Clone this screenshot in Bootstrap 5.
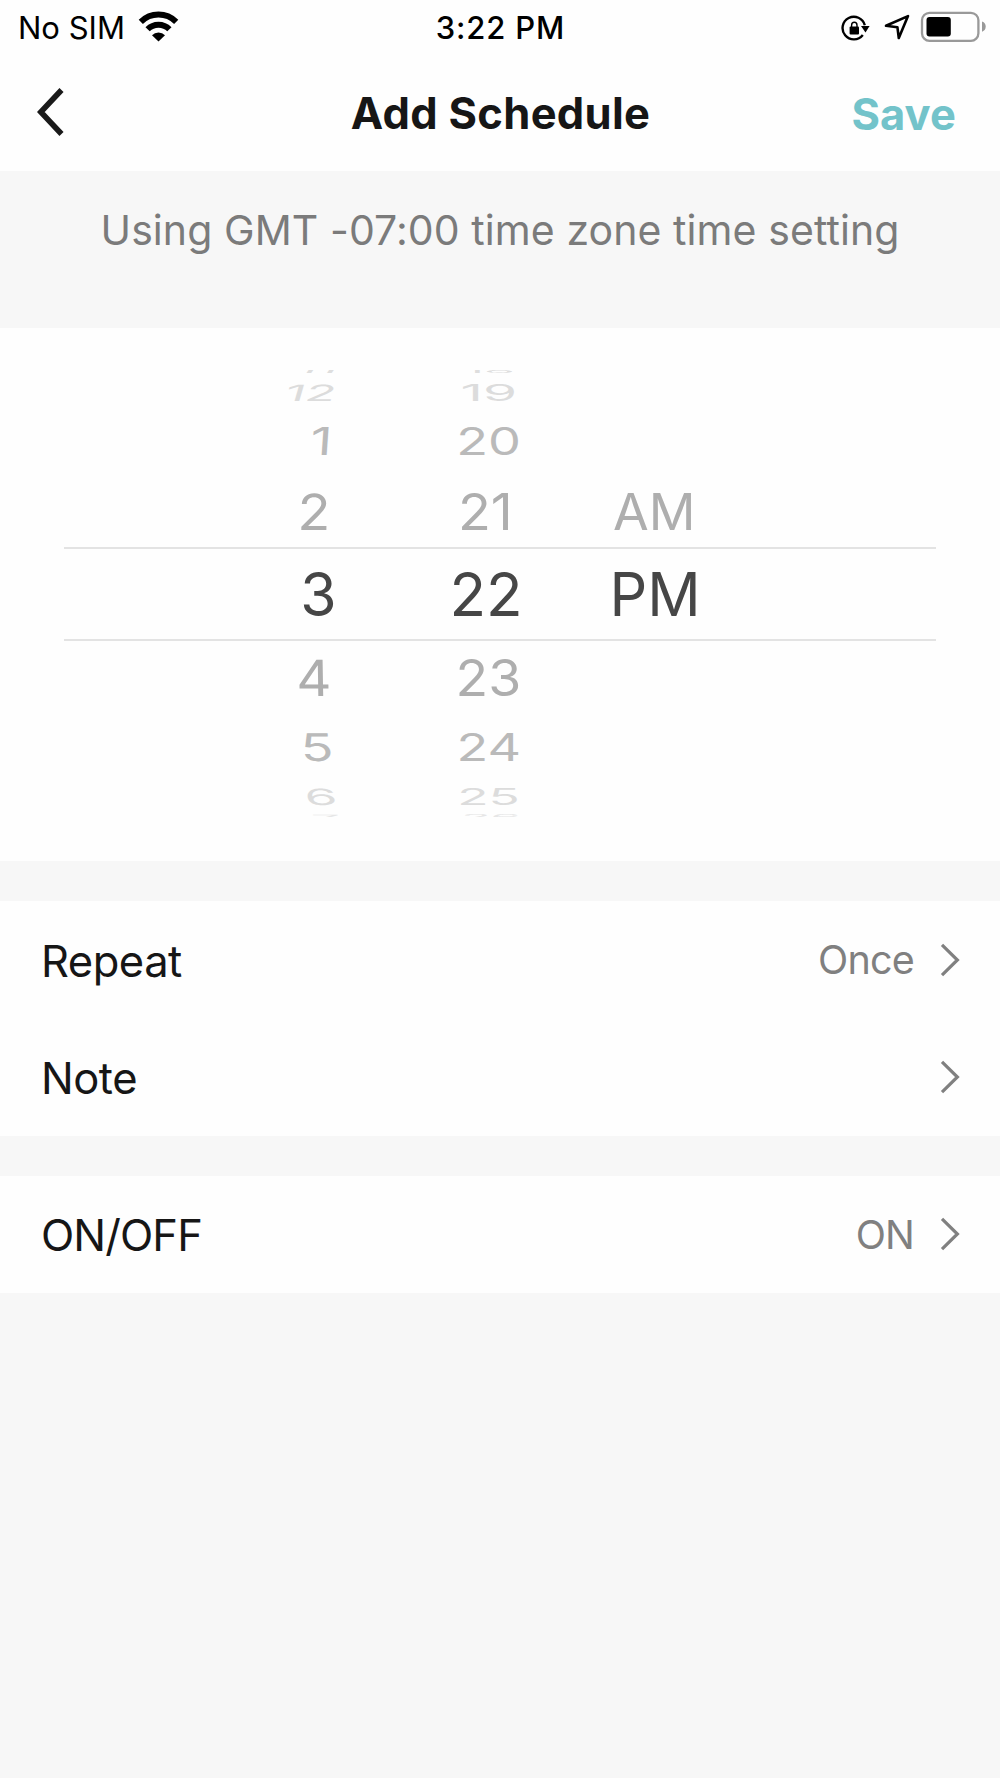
<!DOCTYPE html>
<html lang="en">
<head>
<meta charset="utf-8">
<meta name="viewport" content="width=device-width, initial-scale=1">
<title>Add Schedule</title>
<link href="https://cdn.jsdelivr.net/npm/bootstrap@5.3.0/dist/css/bootstrap.min.css" rel="stylesheet">
<style>
  body { font-family: Inter, "Liberation Sans", sans-serif; background: #f7f7f7; color: #161616; line-height: 1; min-height: 1778px; overflow-x: hidden; }
  svg { display: block; flex: none; }
  .surface { background: #fefefe; }

  .status-bar { height: 56px; color: #000; font-size: 31px; padding: 0 13px 1px 18px; }
  .status-side { flex: 1 1 0; }
  .wifi { margin: -2px 0 0 13px; }
  .clock { font-weight: 500; letter-spacing: .85px; margin: 0 4px 0 0; }
  .status-icons { margin-top: -1px; }

  .title-bar { height: 115px; padding: 0 45px 0 46px; }
  .title-side { flex: 1 1 0; }
  .back-icon { margin: -3px 0 0 -9px; }
  .page-title { font-size: 43.5px; font-weight: 700; letter-spacing: .3px; }
  .save-link { font-size: 43.5px; font-weight: 700; letter-spacing: .1px; color: #73c3ca; padding-top: 2px; margin-right: -1px; }

  .zone-hint { height: 157px; padding-top: 39px; font-size: 41px; line-height: 41px; letter-spacing: .08px; color: #7b7b7b; }

  /* Time wheel: each row is tilted a little further back than its neighbour */
  .picker { height: 533px; padding: 41px 64px 0; font-size: 50px; color: #aeaeae; }
  .wheel-row { display: grid; grid-template: 100% / 270px 186px 1fr; align-items: center; white-space: nowrap; --sy: 1; --dy: .7px; --lean: 0deg; }
  .wheel-row > span { justify-self: end; transform-origin: 100% 50%; transform: translate(var(--dx, 0), var(--dy)) skewX(var(--lean)) scale(var(--sx, 1), var(--sy)); }
  .wheel-row > span + span { --lean: 0deg; }
  .wheel-row > .meridiem { justify-self: start; margin-left: 93px; transform-origin: 0 50%; }
  .h-edge { height: 9px; --sy: .13; --dy: -3px; color: #dedede; clip-path: inset(1px 0 0 0); }
  .h-far { height: 28px; --sy: .45; color: #dcdcdc; }
  .h-mid { height: 69px; --sy: .77; --dy: 0px; color: #bababa; }
  .h-near { height: 72px; }
  .h-now { height: 94px; --dy: 0px; font-size: 60px; color: #464646; border: solid #e3e3e3; border-width: 2px 0; }
  .below.h-mid { height: 68px; --sy: .76; --dy: .7px; }
  .below.h-far { height: 30px; }
  .below.h-edge { --sy: .12; --dy: 1px; clip-path: inset(0 0 3px 0); color: #e6e6e6; }
  .v11 { --dx: 4px; --lean: -35deg; }
  .v18 { --dx: -5px; }
  .v12 { --dx: 2.5px; --lean: -16deg; }
  .v19 { --dx: -3.3px; --sx: 1.1; }
  .v1 { --dx: -2px; --sx: 1.07; --lean: -4deg; }
  .v20 { --dx: 1px; --sx: 1.045; }
  .v2 { --dx: -4px; --sx: 1.08; --lean: -1deg; }
  .v21 { --dx: -7px; --sx: 1.08; }
  .am { --sx: 1.035; }
  .v3 { --dx: 2.5px; --sx: .98; }
  .v22 { --dx: 2.6px; }
  .pm { --dx: -3.4px; --sx: .985; }
  .v4 { --dx: -3px; --sx: 1.09; --lean: 1deg; }
  .v23 { --dx: .8px; --sx: 1.07; }
  .v5 { --dx: -1px; --sx: 1.08; --lean: 3deg; }
  .v24 { --dx: 1px; --sx: 1.04; }
  .v6 { --dx: 3px; --sx: 1.05; --lean: 10deg; }
  .v25 { --sx: 1.03; }
  .v7 { --dx: 7px; --sx: 1.04; --lean: 30deg; }
  .v26 { --sx: .96; }

  .gap-band { height: 40px; }
  .setting { height: 117.3px; padding: 0 40px 0 41px; color: #161616; }
  .setting-name { font-size: 43.5px; letter-spacing: -.5px; padding-top: 4px; }
  .setting-name.caps { letter-spacing: -.9px; }
  .setting-value { font-size: 39.5px; letter-spacing: -.8px; color: #808080; padding-top: 3px; margin-right: 26px; }
</style>
</head>
<body>
<header class="surface">
  <div class="status-bar d-flex align-items-center">
    <div class="status-side d-flex align-items-center">
      <span>No SIM</span>
      <svg class="wifi" width="41" height="31" viewBox="0 0 41 31" fill="none" stroke="#000" stroke-width="5.9">
        <path d="M2.8 10.9A25 25 0 0 1 38.2 10.9"/>
        <path d="M9.6 18.3A15.2 15.2 0 0 1 31.4 18.3"/>
        <path d="M14 24.2A9 9 0 0 1 27 24.2L20.5 30.6Z" fill="#000" stroke="none"/>
      </svg>
    </div>
    <span class="clock">3:22 PM</span>
    <div class="status-side status-icons d-flex align-items-center justify-content-end">
      <svg width="146" height="32" viewBox="841 11 146 32" fill="none" stroke="#000">
        <path d="M864.8 25.2A11.3 11.3 0 1 0 862.8 35" stroke-width="2.4"/>
        <path d="M861 26H869.6L865.5 32.4Z" fill="#000" stroke="none"/>
        <rect x="849.6" y="26.6" width="9.4" height="7.8" rx="1" fill="#000" stroke="none"/>
        <path d="M851.6 27V25.2A2.7 2.9 0 0 1 857 25.2V27" stroke-width="1.4"/>
        <path d="M886 25.8L908 16.1L898.8 38L897.4 27.2Z" stroke-width="2.6" stroke-linejoin="round"/>
        <rect x="922" y="12.8" width="56.4" height="28" rx="7.5" stroke="#999" stroke-width="2.3"/>
        <rect x="926.5" y="17" width="24.3" height="19.4" rx="3" fill="#000" stroke="none"/>
        <path d="M982 21.5C984.6 22.3 985.7 24.2 985.7 26.6S984.6 30.9 982 31.8Z" fill="#999" stroke="none"/>
      </svg>
    </div>
  </div>
  <nav class="title-bar d-flex align-items-center">
    <div class="title-side">
      <svg class="back-icon" width="27" height="48" viewBox="0 0 27 48" fill="none" stroke="#1a1a1a" stroke-width="5.6"><path d="M24.5 2L3.8 24L24.5 46"/></svg>
    </div>
    <span class="page-title">Add Schedule</span>
    <div class="title-side text-end"><a class="save-link text-decoration-none d-inline-block">Save</a></div>
  </nav>
</header>

<p class="zone-hint text-center mb-0">Using GMT -07:00 time zone time setting</p>

<section class="picker surface">
  <div class="wheel-row h-edge"><span class="v11">11</span><span class="v18">18</span></div>
  <div class="wheel-row h-far"><span class="v12">12</span><span class="v19">19</span></div>
  <div class="wheel-row h-mid"><span class="v1">1</span><span class="v20">20</span></div>
  <div class="wheel-row h-near"><span class="v2">2</span><span class="v21">21</span><span class="meridiem am">AM</span></div>
  <div class="wheel-row h-now"><span class="v3">3</span><span class="v22">22</span><span class="meridiem pm">PM</span></div>
  <div class="wheel-row h-near below"><span class="v4">4</span><span class="v23">23</span></div>
  <div class="wheel-row h-mid below"><span class="v5">5</span><span class="v24">24</span></div>
  <div class="wheel-row h-far below"><span class="v6">6</span><span class="v25">25</span></div>
  <div class="wheel-row h-edge below"><span class="v7">7</span><span class="v26">26</span></div>
</section>

<div class="gap-band"></div>

<section class="surface">
  <div class="setting d-flex align-items-center">
    <span class="setting-name me-auto">Repeat</span>
    <span class="setting-value">Once</span>
    <svg width="20" height="34" viewBox="0 0 20 34" fill="none" stroke="#808080" stroke-width="3.2"><path d="M2 1.8L17.4 17L2 32.2"/></svg>
  </div>
  <div class="setting d-flex align-items-center">
    <span class="setting-name me-auto">Note</span>
    <svg width="20" height="34" viewBox="0 0 20 34" fill="none" stroke="#808080" stroke-width="3.2"><path d="M2 1.8L17.4 17L2 32.2"/></svg>
  </div>
</section>

<div class="gap-band"></div>

<section class="surface">
  <div class="setting d-flex align-items-center">
    <span class="setting-name caps me-auto">ON/OFF</span>
    <span class="setting-value">ON</span>
    <svg width="20" height="34" viewBox="0 0 20 34" fill="none" stroke="#808080" stroke-width="3.2"><path d="M2 1.8L17.4 17L2 32.2"/></svg>
  </div>
</section>
<script src="https://cdn.jsdelivr.net/npm/bootstrap@5.3.0/dist/js/bootstrap.bundle.min.js"></script>
</body>
</html>
